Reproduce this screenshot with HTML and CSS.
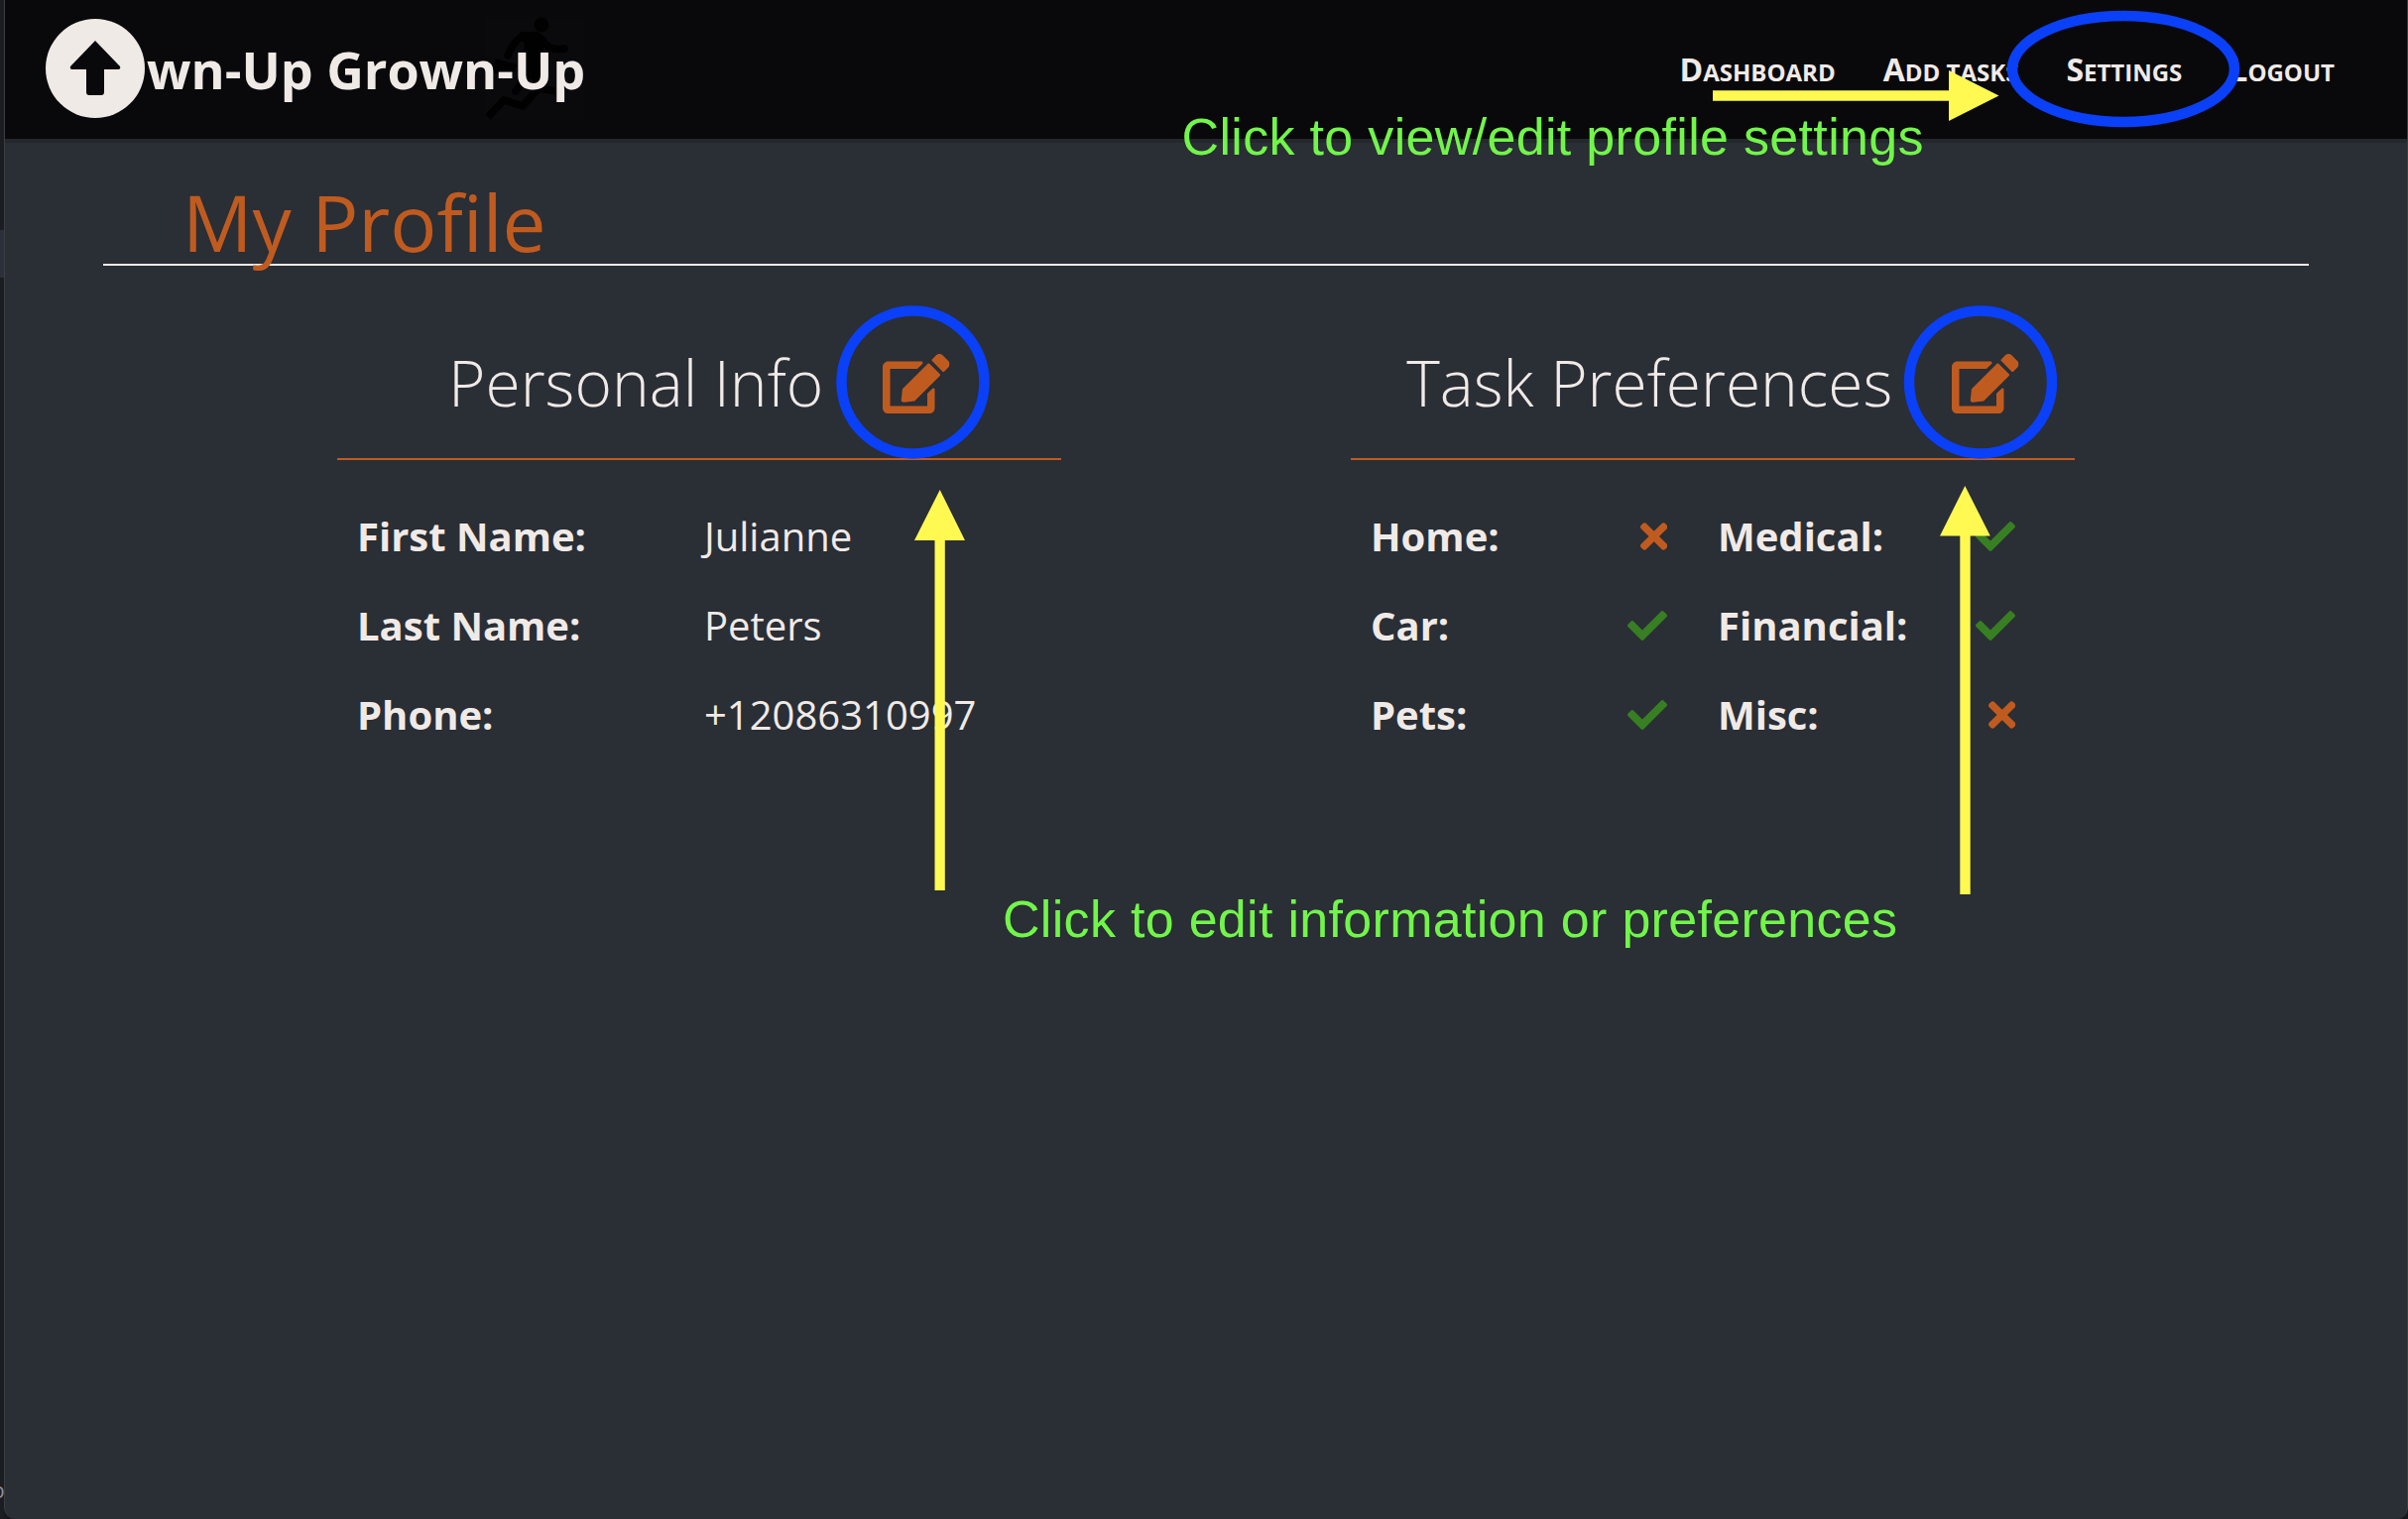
FILE: index.html
```html
<!DOCTYPE html>
<html lang="en">
<head>
<meta charset="utf-8">
<title>My Profile</title>
<link rel="stylesheet" href="styles.css">
</head>
<body>
<svg class="sprite" aria-hidden="true">
  <symbol id="edit" viewBox="0 0 576 512"><path d="M402.6 83.2l90.2 90.2c3.8 3.8 3.8 10 0 13.8L274.400 405.600l-92.800 10.300c-12.400 1.400-22.900-9.100-21.500-21.500l10.300-92.800L388.800 83.200c3.800-3.800 10-3.800 13.800 0zm162-22.900l-48.800-48.800c-15.200-15.200-39.900-15.200-55.200 0l-35.400 35.400c-3.800 3.800-3.800 10 0 13.800l90.200 90.200c3.800 3.800 10 3.800 13.800 0l35.400-35.400c15.200-15.300 15.200-40 0-55.200zM384 346.200V448H64V128h229.800c3.200 0 6.200-1.300 8.500-3.500l40-40c7.600-7.600 2.200-20.500-8.500-20.500H48C21.500 64 0 85.500 0 112v352c0 26.500 21.500 48 48 48h352c26.500 0 48-21.500 48-48V306.200c0-10.700-12.900-16-20.500-8.500l-40 40c-2.200 2.300-3.500 5.300-3.500 8.500z"/></symbol>
  <symbol id="check" viewBox="0 0 512 512"><path d="M173.898 439.404l-166.400-166.400c-9.997-9.997-9.997-26.206 0-36.204l36.203-36.204c9.997-9.998 26.207-9.998 36.204 0L192 312.690 432.095 72.596c9.997-9.997 26.207-9.997 36.204 0l36.203 36.204c9.997 9.997 9.997 26.206 0 36.204l-294.400 294.401c-9.998 9.997-26.207 9.997-36.204-.001z"/></symbol>
  <symbol id="times" viewBox="0 0 352 512"><path d="M242.720 256l100.070-100.070c12.280-12.280 12.280-32.190 0-44.480l-22.240-22.240c-12.280-12.280-32.190-12.280-44.480 0L176 189.280 75.930 89.210c-12.280-12.280-32.190-12.280-44.480 0L9.210 111.450c-12.280 12.280-12.280 32.190 0 44.480L109.280 256 9.210 356.070c-12.280 12.280-12.280 32.190 0 44.480l22.240 22.240c12.280 12.280 32.200 12.280 44.480 0L176 322.720l100.070 100.070c12.280 12.280 32.200 12.280 44.480 0l22.240-22.240c12.280-12.280 12.280-32.190 0-44.480L242.720 256z"/></symbol>
</svg>
<aside class="backdrop"><span class="tab"></span><span class="stray">o</span></aside>
<div class="window">
  <header class="topbar">
    <div class="brand">
      <svg class="logo" viewBox="0 0 100 100"><circle cx="50" cy="50" r="50" fill="#f0eae7"/><path d="M50 22L75 48Q76 51 73 51H59V74Q59 77 56 77H44Q41 77 41 74V51H27Q24 51 25 48Z" fill="#09090b"/></svg>
      <span class="brand-name">wn-Up Grown-Up</span>
      <svg class="runner" viewBox="0 0 104 104"><rect x="1" y="2" width="101" height="101" fill="#0a0a0c"/><g fill="#010101"><circle cx="59" cy="8" r="7.300"/><path d="M37 15H55Q62 18 63 25L57 45L61 58L55 70L37 50L42 30Z"/><path d="M12 42L34 48L30 61L9 56Z"/></g><g fill="none" stroke="#010101" stroke-width="7.500"><path d="M44 19C34 20 29 30 25 39M60 23C65 32 72 34 82 32" stroke-linecap="round"/><path d="M48 55L33 75" stroke-linecap="round"/><path d="M5 101L21 84L40 90L56 72L80 76"/></g></svg>
    </div>
    <nav class="menu"><a>Dashboard</a><a>Add tasks</a><a>Settings</a><a>Logout</a></nav>
  </header>
  <main>
    <h1>My Profile</h1>
    <div class="columns">
      <section class="panel">
        <h2><span>Personal Info</span><svg class="edit"><use href="#edit"/></svg></h2>
        <dl class="info">
          <dt>First Name:</dt><dd>Julianne</dd>
          <dt>Last Name:</dt><dd>Peters</dd>
          <dt>Phone:</dt><dd>+12086310997</dd>
        </dl>
      </section>
      <section class="panel">
        <h2><span>Task Preferences</span><svg class="edit"><use href="#edit"/></svg></h2>
        <ul class="prefs">
          <li><b>Home:</b><svg class="no"><use href="#times"/></svg></li>
          <li><b>Medical:</b><svg class="yes"><use href="#check"/></svg></li>
          <li><b>Car:</b><svg class="yes"><use href="#check"/></svg></li>
          <li><b>Financial:</b><svg class="yes"><use href="#check"/></svg></li>
          <li><b>Pets:</b><svg class="yes"><use href="#check"/></svg></li>
          <li><b>Misc:</b><svg class="no"><use href="#times"/></svg></li>
        </ul>
      </section>
    </div>
  </main>
</div>
<svg class="notes" viewBox="0 0 2428 1532">
  <g class="ring"><ellipse cx="2141" cy="69.500" rx="112" ry="53.500"/><circle cx="920.500" cy="385.500" r="72"/><circle cx="1997" cy="385.500" r="72"/></g>
  <g class="arrow"><path d="M1727 91.300H1965V71L2015.500 96.500L1965 122V101.700H1727Z"/><path d="M942.500 898V545H922L947.700 494L973 545H952.800V898Z"/><path d="M1976.300 902V540.500H1956L1981.300 490L2006.800 540.500H1986.700V902Z"/></g>
  <text x="1191.500" y="155.500" textLength="748">Click to view/edit profile settings</text>
  <text x="1011" y="944.500" textLength="902">Click to edit information or preferences</text>
</svg>
</body>
</html>
```
FILE: styles.css
```css
* { box-sizing: border-box; margin: 0; padding: 0; }
body {
  width: 2428px; height: 1532px; overflow: hidden; position: relative;
  display: flex; background: #17191c; color: #f0eae7;
  font-family: "Open Sans", sans-serif;
}
.sprite { position: absolute; width: 0; height: 0; }
.backdrop { width: 4px; flex: none; overflow: hidden; background: #1b1d22; display: flex; flex-direction: column; padding-top: 232px; }
.tab { height: 48px; background: #2c303a; }
.stray { margin: 1209px 0 0 -8px; font-size: 21px; line-height: 28px; color: #9094a0; }
.window { flex: 1; background: #2a2e35; border-left: 1px solid #3a3d42; border-right: 1px solid #3a3d42; border-radius: 0 0 12px 12px; overflow: hidden; }
.topbar { height: 144px; background: #09090b; border-bottom: 4px solid #24282c; display: flex; justify-content: space-between; padding: 0 73px 0 41px; }
.brand { display: flex; position: relative; padding-top: 19px; }
.logo { width: 100px; height: 100px; }
.brand-name { font-size: 52px; font-weight: 700; line-height: 71px; margin-top: 15px; margin-left: 2px; white-space: nowrap; position: relative; z-index: 1; }
.runner { position: absolute; left: 441px; top: 17px; width: 104px; height: 104px; }
.menu { display: flex; gap: 48px; font-size: 24px; font-weight: 700; text-transform: uppercase; line-height: 43px; padding-top: 48px; white-space: nowrap; }
.menu a::first-letter { font-size: 32px; }
h1 { margin: 0 99px; height: 124px; border-bottom: 2px solid #f0eae7; padding: 24px 0 0 80px; font-size: 78.400px; line-height: 111px; font-weight: 400; color: #c05b20; white-space: nowrap; }
.columns { display: flex; gap: 292px; padding: 73px 0 0 335px; }
.panel { width: 730px; }
h2 { height: 123px; border-bottom: 2px solid #c05b20; display: flex; justify-content: center; font-size: 64px; font-weight: 300; line-height: 89px; white-space: nowrap; }
.edit { width: 67.500px; height: 60px; margin: 16px 0 0 60px; fill: #c05b20; flex: none; }
.info { display: grid; grid-template-columns: 350px 1fr; grid-auto-rows: 90px; padding: 49px 0 0 20px; font-size: 40px; line-height: 55px; }
.info dt, .prefs b { font-weight: 700; }
.info dd { font-weight: 400; }
.prefs { list-style: none; display: grid; grid-template-columns: 299px 300px; column-gap: 51px; grid-auto-rows: 90px; padding: 49px 0 0 20px; font-size: 40px; line-height: 55px; }
.prefs li { display: flex; justify-content: space-between; }
.prefs svg { height: 40px; margin-top: 8px; }
.yes { width: 40px; fill: #377f22; }
.no { width: 27.500px; fill: #c05b20; }
.notes { position: absolute; left: 0; top: 0; width: 2428px; height: 1532px; }
.ring { fill: none; stroke: #0a40f8; stroke-width: 10.500px; }
.arrow { fill: #fff952; }
.notes text { font-family: "Liberation Sans", Arial, sans-serif; font-size: 52px; fill: #72f54a; }
```
